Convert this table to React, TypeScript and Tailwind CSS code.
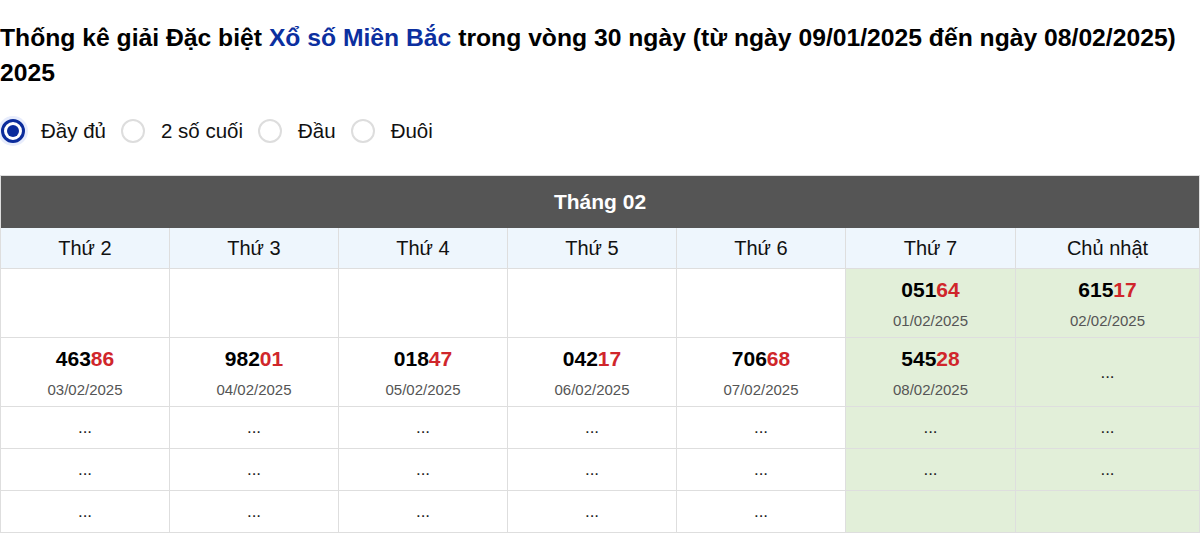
import React from "react";

type Cell = { num?: string; date?: string; dots?: boolean } | null;

const days = ["Thứ 2", "Thứ 3", "Thứ 4", "Thứ 5", "Thứ 6", "Thứ 7", "Chủ nhật"];

const rows: { h: string; cells: Cell[] }[] = [
  {
    h: "h-[68px]",
    cells: [null, null, null, null, null, { num: "05164", date: "01/02/2025" }, { num: "61517", date: "02/02/2025" }],
  },
  {
    h: "h-[68px]",
    cells: [
      { num: "46386", date: "03/02/2025" },
      { num: "98201", date: "04/02/2025" },
      { num: "01847", date: "05/02/2025" },
      { num: "04217", date: "06/02/2025" },
      { num: "70668", date: "07/02/2025" },
      { num: "54528", date: "08/02/2025" },
      { dots: true },
    ],
  },
  { h: "h-[41px]", cells: Array.from({ length: 7 }, () => ({ dots: true })) },
  { h: "h-[41px]", cells: Array.from({ length: 7 }, () => ({ dots: true })) },
  { h: "h-[41px]", cells: [{ dots: true }, { dots: true }, { dots: true }, { dots: true }, { dots: true }, null, null] },
];

function Radio({ checked, label }: { checked?: boolean; label: string }) {
  return (
    <div className="flex items-center gap-4">
      {checked ? (
        <span className="w-6 h-6 rounded-full border-[3px] border-[#0b2c9c] bg-white flex items-center justify-center shadow-[0_0_0_3px_rgba(60,100,230,0.12)]">
          <span className="w-[12px] h-[12px] rounded-full bg-[#0b2c9c]" />
        </span>
      ) : (
        <span className="w-6 h-6 rounded-full border-2 border-[#dddddd] bg-white" />
      )}
      <span className="text-[20.5px] text-[#111]">{label}</span>
    </div>
  );
}

export default function App() {
  return (
    <div className="w-[1200px] h-[534px] bg-white overflow-hidden" style={{ fontFamily: '"Liberation Sans", Arial, sans-serif' }}>
      <h1 className="pt-[20px] text-[24.7px] leading-[35px] font-bold text-black">
        Thống kê giải Đặc biệt <span className="text-[#0c2f9f]">Xổ số Miền Bắc</span> trong vòng 30 ngày (từ ngày 09/01/2025
        đến ngày 08/02/2025) 2025
      </h1>
      <div className="mt-[29px] pl-px flex items-center gap-[15px] h-[24px]">
        <Radio checked label="Đầy đủ" />
        <Radio label="2 số cuối" />
        <Radio label="Đầu" />
        <Radio label="Đuôi" />
      </div>
      <div className="mt-[32px] border border-[#dedede]">
        <div className="h-[52px] bg-[#555555] flex items-center justify-center text-white font-bold text-[21px]">
          Tháng 02
        </div>
        <div className="grid grid-cols-[168px_168px_168px_168px_168px_169px_1fr] gap-px bg-[#dedede]">
          {days.map((d) => (
            <div key={d} className="h-[40px] bg-[#eef6fd] flex items-center justify-center text-[20px] text-[#111]">
              {d}
            </div>
          ))}
          {rows.map((r, ri) =>
            r.cells.map((c, ci) => (
              <div
                key={`${ri}-${ci}`}
                className={`${r.h} ${ci >= 5 ? "bg-[#e2efd9]" : "bg-white"} flex flex-col items-center justify-center`}
              >
                {c && c.num && (
                  <>
                    <div className="text-[21px] leading-[25px] font-bold text-black">
                      {c.num.slice(0, 3)}
                      <span className="text-[#d0262b]">{c.num.slice(3)}</span>
                    </div>
                    <div className="mt-[10px] text-[15px] leading-[18px] text-[#555]">{c.date}</div>
                  </>
                )}
                {c && c.dots && <div className="text-[17px] text-[#222] leading-none">...</div>}
              </div>
            ))
          )}
        </div>
      </div>
    </div>
  );
}
